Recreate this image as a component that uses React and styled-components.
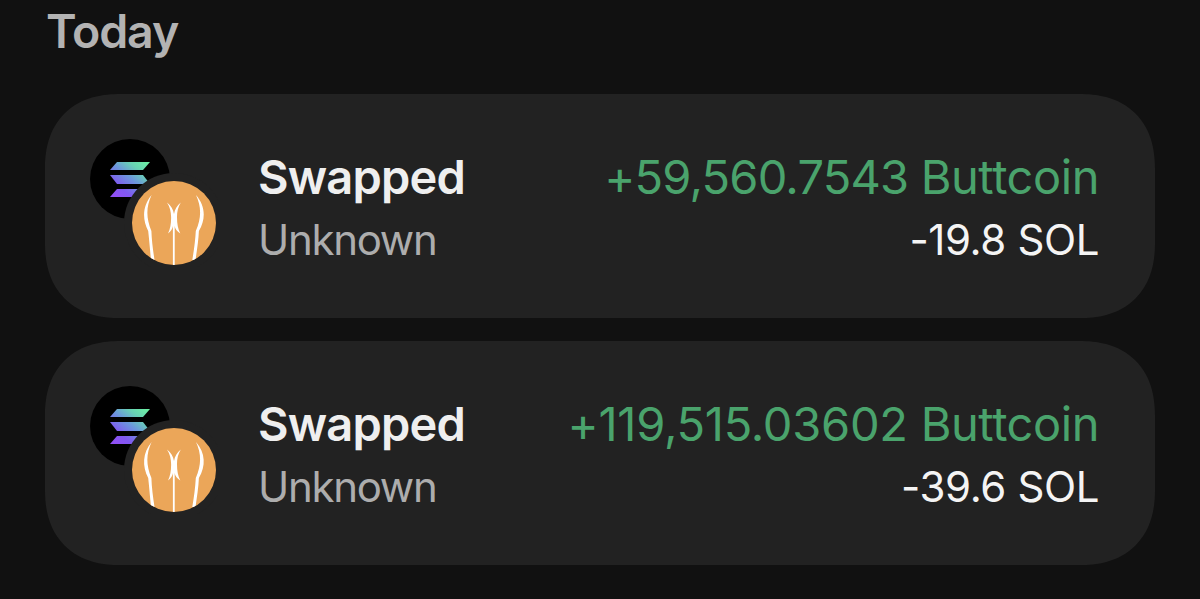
import React from 'react'
import styled, { createGlobalStyle } from 'styled-components'

const GlobalStyle = createGlobalStyle`
body {
  margin: 0;
  background: #111111;
  font-family: Inter, "Liberation Sans", sans-serif;
  overflow: hidden;
}
`
const Page = styled.main`
box-sizing: border-box;
height: 599px;
padding: 1px 45px 0;
`
const DayTitle = styled.h2`
margin: 0 0 33px 1px;
height: 60px;
line-height: 60px;
font-size: 46.5px;
font-weight: 600;
letter-spacing: -1.1px;
color: #b3b3b3;
`
const List = styled.div`
display: flex;
flex-direction: column;
gap: 23px;
`
const Card = styled.section`
box-sizing: border-box;
display: flex;
height: 224px;
padding: 45px 56px 0 45px;
border-radius: 75px;
corner-shape: superellipse(1.2);
background: #222222;
`
const TokenPair = styled.svg`
flex: none;
width: 128px;
height: 128px;
margin-right: 40px;
`
const Column = styled.div`
display: flex;
flex-direction: column;
align-items: ${props => (props.$end ? 'flex-end' : 'flex-start')};
margin-left: ${props => (props.$end ? 'auto' : '0')};
padding-top: 7px;
`
const Primary = styled.div`
height: 63px;
line-height: 62px;
font-size: 47px;
white-space: nowrap;
font-weight: ${props => (props.$bold ? 600 : 400)};
color: ${props => (props.$gain ? '#4aa36c' : '#efefef')};
letter-spacing: ${props => props.$spacing || '0'};
`
const Secondary = styled.div`
height: 62px;
line-height: 62px;
font-size: 42px;
white-space: nowrap;
color: ${props => (props.$muted ? '#adadad' : '#f4f4f4')};
letter-spacing: ${props => props.$spacing || '0'};
`
const Symbol = styled.span`
letter-spacing: ${props => props.$spacing || '0'};
`

const swaps = [
  { id: 'a', received: '+59,560.7543', paid: '-19.8', spacing: '-0.8px' },
  { id: 'b', received: '+119,515.03602', paid: '-39.6', spacing: '-0.25px' },
]

const Tokens = ({ id }) => (
  <TokenPair viewBox="0 0 128 128">
    <defs>
      <linearGradient id={`sol-${id}`} gradientUnits="userSpaceOnUse" x1="55" y1="21" x2="26" y2="57">
        <stop offset="0" stopColor="#6cf0a4" />
        <stop offset="0.25" stopColor="#68d2b4" />
        <stop offset="0.5" stopColor="#6c96dc" />
        <stop offset="0.8" stopColor="#8058f0" />
        <stop offset="1" stopColor="#9050f5" />
      </linearGradient>
      <clipPath id={`coin-${id}`}>
        <circle cx="84" cy="84" r="42" />
      </clipPath>
    </defs>
    <circle cx="40" cy="40" r="40" fill="#000000" />
    <g fill={`url(#sol-${id})`}>
      <path d="M27 23h33l-7 8H20z" />
      <path d="M20 36h33l7 9H27z" />
      <path d="M27 50h33l-7 8H20z" />
    </g>
    <circle cx="84" cy="84" r="50" fill="#222222" />
    <circle cx="84" cy="84" r="42" fill="#eba659" />
    <g clipPath={`url(#coin-${id})`} fill="#ffffff">
      <path d="M61.600 56C52.500 67 52 80 58.200 92C59.200 101 60 111 61 121L64.500 121C63 111 61.700 101 61.400 92C56 79 56 68 61.600 56z" />
      <path d="M106 56C115.500 67 116 80 108.900 92C108.500 101 107 111 105.500 121L102.300 121C104 111 105.300 101 105.800 92C111.500 79 111.500 68 106 56z" />
      <path d="M77 63.500C81 66.500 83.300 70.500 84 75C84.700 70.500 87 66.500 90.800 63.500C88 68 87 73 87 78C87 85 88 90 90.300 94.500C87 92 85 90 84.700 87V127H82.900V87C82.500 90 81 92 78 94.500C80.200 90 81.200 85 81.100 78C81 73 80 68 77 63.500z" />
    </g>
  </TokenPair>
)

const SwapCard = ({ swap }) => (
  <Card>
    <Tokens id={swap.id} />
    <Column>
      <Primary $bold $spacing="-0.8px">Swapped</Primary>
      <Secondary $muted $spacing="-1.3px">Unknown</Secondary>
    </Column>
    <Column $end>
      <Primary $gain $spacing={swap.spacing}>
        {swap.received} <Symbol $spacing="-0.45px">Buttcoin</Symbol>
      </Primary>
      <Secondary $spacing="-0.4px">{swap.paid} SOL</Secondary>
    </Column>
  </Card>
)

const App = () => (
  <>
    <GlobalStyle />
    <Page>
      <DayTitle>Today</DayTitle>
      <List>
        {swaps.map(swap => <SwapCard key={swap.id} swap={swap} />)}
      </List>
    </Page>
  </>
)

export default App
